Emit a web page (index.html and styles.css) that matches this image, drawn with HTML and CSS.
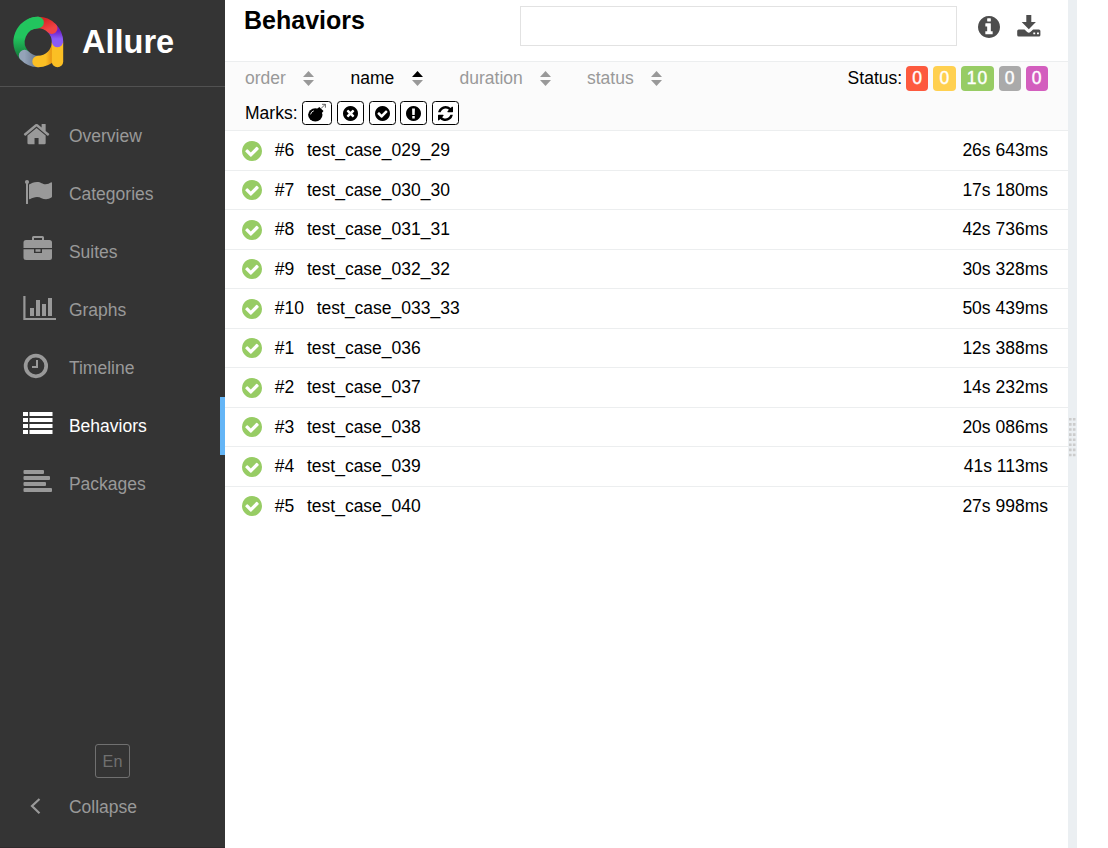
FILE: index.html
```html
<!DOCTYPE html>
<html lang="en">
<head>
<meta charset="utf-8">
<title>Allure Report</title>
<link rel="stylesheet" href="styles.css">
</head>
<body>
<svg width="0" height="0" class="defs" aria-hidden="true">
  <symbol id="check" viewBox="128 128 1536 1536"><path d="M1412 734q0-28-18-46l-91-90q-19-19-45-19t-45 19l-408 407-226-226q-19-19-45-19t-45 19l-91 90q-18 18-18 46 0 27 18 45l362 362q19 19 45 19 27 0 46-19l543-543q18-18 18-45zm252 162q0 209-103 385.5t-279.5 279.5-385.5 103-385.5-103-279.5-279.5-103-385.5 103-385.5 279.5-279.5 385.5-103 385.5 103 279.5 279.5 103 385.5z"/></symbol>
  <symbol id="sort" viewBox="0 0 11 15"><path class="up" d="M5.5 0 11 6H0z"/><path class="down" d="M0 9h11l-5.500 6z"/></symbol>
</svg>
<div class="app">
  <aside class="side">
    <div class="brand">
      <svg class="logo" width="52" height="52" viewBox="12 16 52 52" stroke-width="11.400" stroke-linecap="round">
        <defs>
          <linearGradient id="gp" x1="0" y1="0" x2="0" y2="1"><stop offset=".2" stop-color="#6d1fc9"/><stop offset=".8" stop-color="#8b5cf6"/></linearGradient>
          <linearGradient id="gr" x1="0" y1="0" x2="1" y2="1"><stop offset="0" stop-color="#d92626"/><stop offset="1" stop-color="#f04444"/></linearGradient>
          <linearGradient id="gg" x1="0" y1="0" x2="0" y2="1"><stop offset=".45" stop-color="#22c55e"/><stop offset="1" stop-color="#15803d"/></linearGradient>
          <linearGradient id="gs" x1="0" y1="0" x2="1" y2="0"><stop offset="0" stop-color="#94a3b8"/><stop offset="1" stop-color="#64748b"/></linearGradient>
          <linearGradient id="gy" x1="0" y1="0" x2="1" y2="0"><stop offset=".4" stop-color="#fbbf24"/><stop offset=".8" stop-color="#e0860c"/></linearGradient>
        </defs>
        <path stroke="url(#gg)" d="M24.500 55.500A19.500 19.500 0 0 1 38 22.500"/>
        <path stroke="url(#gs)" d="M24.500 55.500A19.500 19.500 0 0 0 38 61.500"/>
        <path stroke="url(#gy)" d="M38 61.500A19.500 19.500 0 0 0 57.500 42"/>
        <path stroke="#fbbf24" d="M57.500 43v18.500"/>
        <path stroke="url(#gp)" d="M51.800 28.200A19.500 19.500 0 0 1 57.500 41.500"/>
        <path stroke="url(#gr)" d="M38 22.500A19.500 19.500 0 0 1 51.800 28.200"/>
        <path stroke="#22c55e" d="M32 23.500A19.500 19.500 0 0 1 38.200 22.500"/>
      </svg>
      <span>Allure</span>
    </div>
    <nav class="nav">
      <a class="item"><svg width="36" height="58" viewBox="0 0 36 58"><path transform="translate(2.400 12.900) scale(.0158)" d="M1472 992v480q0 26-19 45t-45 19h-384v-384h-256v384h-384q-26 0-45-19t-19-45v-480q0-1 .5-3t.5-3l575-474 575 474q1 2 1 6zm223-69l-62 74q-8 9-21 11h-3q-13 0-21-7l-692-577-692 577q-12 8-24 7-13-2-21-11l-62-74q-8-10-7-23.500t11-21.500l719-599q32-26 76-26t76 26l244 204v-195q0-14 9-23t23-9h192q14 0 23 9t9 23v408l219 182q10 8 11 21.500t-7 23.500z"/></svg>Overview</a>
      <a class="item"><svg width="36" height="58" viewBox="0 0 36 58"><circle cx="7" cy="17" r="2.100"/><path d="M6 17h2v21.500q0 .5-.5.500h-1q-.5 0-.5-.500zM9 19.600C11 18.400 14 17 17 17c4 0 5.500 2.300 8.500 2.300 2.200 0 4.200-1.100 5.300-1.800q1.200-.6 1.200.6v13.300q0 .8-.7 1.200C29.500 33.500 28 34.200 26 34.200c-3.500 0-5.500-2.300-9-2.300-2.600 0-5 1.100-6.700 2.100Q9 34.700 9 33.500z"/></svg>Categories</a>
      <a class="item"><svg width="36" height="58" viewBox="0 0 36 58"><path fill-rule="evenodd" d="M12 17V14.500Q12 13 13.500 13h9.000q1.500 0 1.500 1.500V17h5.500q2.500 0 2.500 2.500V25H3.500v-5.500Q3.500 17 6 17zM14 17h8v-2h-8zM3.500 26.300H14V30h8v-3.700h10v8.200q0 2.500-2.500 2.500H6q-2.500 0-2.500-2.500zM15.500 26.300h5v2.400h-5z"/></svg>Suites</a>
      <a class="item"><svg width="36" height="58" viewBox="0 0 36 58"><path d="M3.300 15h2.200v22H36v2H3.300zM10 27h4v8h-4zM16 19h4v16h-4zM22 23h4v12h-4zM28 17h4v18h-4z"/></svg>Graphs</a>
      <a class="item"><svg width="36" height="58" viewBox="0 0 36 58"><circle cx="15.900" cy="27" r="10.300" fill="none" stroke="currentColor" stroke-width="3.700"/><path d="M16 21h2v8.000h-6v-2h4z"/></svg>Timeline</a>
      <a class="item active"><svg width="36" height="58" viewBox="0 0 36 58"><path d="M3 15h5v4H3zM9.500 15h23v4h-23zM3 21h5v4H3zM9.500 21h23v4h-23zM3 27h5v4H3zM9.500 27h23v4h-23zM3 33h5v4H3zM9.500 33h23v4h-23z"/></svg>Behaviors</a>
      <a class="item"><svg width="36" height="58" viewBox="0 0 36 58"><rect x="3.500" y="15" width="20.500" height="4" rx="1"/><rect x="3.500" y="21" width="26.500" height="4" rx="1"/><rect x="3.500" y="27" width="22.500" height="4" rx="1"/><rect x="3.500" y="33" width="28.500" height="4" rx="1"/></svg>Packages</a>
    </nav>
    <div class="foot">
      <span class="lang">En</span>
      <a class="item collapse"><svg width="36" height="58" viewBox="0 0 36 58"><path fill="none" stroke="currentColor" stroke-width="2.200" d="M19.500 21 12 28l7.500 7.300"/></svg>Collapse</a>
    </div>
  </aside>
  <main class="main">
    <header class="head">
      <h1>Behaviors</h1>
      <input class="search" type="text" aria-label="Search">
      <svg class="info" width="22" height="22" viewBox="128 128 1536 1536"><path d="M1152 1376v-160q0-14-9-23t-23-9h-96v-512q0-14-9-23t-23-9h-320q-14 0-23 9t-9 23v160q0 14 9 23t23 9h96v320h-96q-14 0-23 9t-9 23v160q0 14 9 23t23 9h448q14 0 23-9t9-23zm-128-896v-160q0-14-9-23t-23-9h-192q-14 0-23 9t-9 23v160q0 14 9 23t23 9h192q14 0 23-9t9-23zm640 416q0 209-103 385.500t-279.500 279.500-385.500 103-385.500-103-279.500-279.500-103-385.500 103-385.500 279.500-279.500 385.500-103 385.500 103 279.500 279.500 103 385.500z"/></svg>
      <svg class="save" width="24" height="22" viewBox="0 0 24 22"><path fill-rule="evenodd" d="M9.300 0h5v7h4.600L11.800 14.300 4.700 7h4.600zM1.700 14.400h5.800l2.700 2.600q1.600 1.300 3.200 0l2.700-2.600h5.800q1.500 0 1.500 1.500v4q0 1.500-1.500 1.500H1.700Q.2 21.400.2 19.900v-4q0-1.500 1.500-1.500zM16.300 17.500v1.800h1.900v-1.800zM20 17.500v1.800h1.900v-1.800z"/></svg>
    </header>
    <section class="filters">
      <div class="line">
        <span class="sort s1">order<svg width="11" height="15"><use href="#sort"/></svg></span>
        <span class="sort s2 on">name<svg width="11" height="15"><use href="#sort"/></svg></span>
        <span class="sort s3">duration<svg width="11" height="15"><use href="#sort"/></svg></span>
        <span class="sort s4">status<svg width="11" height="15"><use href="#sort"/></svg></span>
        <span class="statuses"><span class="label">Status:</span><b class="badge failed">0</b><b class="badge broken">0</b><b class="badge passed">10</b><b class="badge skipped">0</b><b class="badge unknown">0</b></span>
      </div>
      <div class="marks"><span class="label">Marks:</span>
        <span class="mark wide"><svg width="20" height="20" viewBox="0 0 20 20"><ellipse cx="8.300" cy="11.800" rx="7.200" ry="6.600"/><path d="m10 6 2.300-2.100 4.200 4.200L14 11z"/><path fill="none" stroke="#fff" stroke-width=".9" d="M3.600 11.400q.4-2.700 3.200-3.600"/><path fill="none" stroke="#555" stroke-width=".9" d="M14 5.600 18.500 1M15 1.300h3.400v3.400"/></svg></span>
        <span class="mark"><svg width="15" height="15" viewBox="128 128 1536 1536"><path d="M1277 1122q0-26-19-45l-181-181 181-181q19-19 19-45 0-27-19-46l-90-90q-19-19-46-19-26 0-45 19l-181 181-181-181q-19-19-45-19-27 0-46 19l-90 90q-19 19-19 46 0 26 19 45l181 181-181 181q-19 19-19 45 0 27 19 46l90 90q19 19 46 19 26 0 45-19l181-181 181 181q19 19 45 19 27 0 46-19l90-90q19-19 19-46zm387-226q0 209-103 385.500t-279.500 279.500-385.500 103-385.500-103-279.500-279.500-103-385.500 103-385.500 279.500-279.500 385.500-103 385.500 103 279.500 279.500 103 385.500z"/></svg></span>
        <span class="mark"><svg width="15" height="15"><use href="#check"/></svg></span>
        <span class="mark"><svg width="15" height="15" viewBox="128 128 1536 1536"><path d="M896 128q209 0 385.500 103t279.500 279.500 103 385.500-103 385.500-279.500 279.500-385.500 103-385.500-103-279.500-279.500-103-385.500 103-385.500 279.500-279.500 385.500-103zm128 1247v-190q0-14-9-23.500t-22-9.500h-192q-13 0-23 10t-10 23v190q0 13 10 23t23 10h192q13 0 22-9.500t9-23.500zm-2-344l18-621q0-12-10-18-10-8-24-8h-220q-14 0-24 8-10 6-10 18l17 621q0 10 10 17.500t24 7.500h185q14 0 23.500-7.500t10.500-17.500z"/></svg></span>
        <span class="mark"><svg width="15" height="15" viewBox="128 128 1536 1536"><path d="M1639 1056q0 5-1 7-64 268-268 434.500t-478 166.500q-146 0-282.500-55t-243.500-157l-129 129q-19 19-45 19t-45-19-19-45v-448q0-26 19-45t45-19h448q26 0 45 19t19 45-19 45l-137 137q71 66 161 102t187 36q134 0 250-65t186-179q11-17 53-117 8-23 30-23h192q13 0 22.500 9.500t9.500 22.500zm25-800v448q0 26-19 45t-45 19h-448q-26 0-45-19t-19-45 19-45l138-138q-148-137-349-137-134 0-250 65t-186 179q-11 17-53 117-8 23-30 23h-199q-13 0-22.500-9.500t-9.500-22.500v-7q65-268 270-434.500t480-166.500q146 0 284 55.500t245 156.500l130-129q19-19 45-19t45 19 19 45z"/></svg></span>
      </div>
    </section>
    <section class="list">
      <div class="row"><svg width="20" height="20"><use href="#check"/></svg><span class="num">#6</span><span>test_case_029_29</span><span class="time">26s 643ms</span></div>
      <div class="row"><svg width="20" height="20"><use href="#check"/></svg><span class="num">#7</span><span>test_case_030_30</span><span class="time">17s 180ms</span></div>
      <div class="row"><svg width="20" height="20"><use href="#check"/></svg><span class="num">#8</span><span>test_case_031_31</span><span class="time">42s 736ms</span></div>
      <div class="row"><svg width="20" height="20"><use href="#check"/></svg><span class="num">#9</span><span>test_case_032_32</span><span class="time">30s 328ms</span></div>
      <div class="row"><svg width="20" height="20"><use href="#check"/></svg><span class="num">#10</span><span>test_case_033_33</span><span class="time">50s 439ms</span></div>
      <div class="row"><svg width="20" height="20"><use href="#check"/></svg><span class="num">#1</span><span>test_case_036</span><span class="time">12s 388ms</span></div>
      <div class="row"><svg width="20" height="20"><use href="#check"/></svg><span class="num">#2</span><span>test_case_037</span><span class="time">14s 232ms</span></div>
      <div class="row"><svg width="20" height="20"><use href="#check"/></svg><span class="num">#3</span><span>test_case_038</span><span class="time">20s 086ms</span></div>
      <div class="row"><svg width="20" height="20"><use href="#check"/></svg><span class="num">#4</span><span>test_case_039</span><span class="time">41s 113ms</span></div>
      <div class="row"><svg width="20" height="20"><use href="#check"/></svg><span class="num">#5</span><span>test_case_040</span><span class="time">27s 998ms</span></div>
    </section>
  </main>
  <div class="gutter"><svg width="7" height="39" viewBox="0 0 7 39"><path class="grip" fill="none" stroke="#ccc" stroke-width="2.600" stroke-dasharray="2.600 2.500" d="M1.300 0v39M5.200 0v39"/></svg></div>
</div>
</body>
</html>
```
FILE: styles.css
```css
* { box-sizing: border-box; }
body {
  margin: 0;
  background: #fff;
  color: #000;
  font: 17.5px/20px "Liberation Sans", Arial, sans-serif;
}
svg { display: block; flex: none; fill: currentColor; }
.defs { position: absolute; }
.app { display: flex; height: 848px; overflow: hidden; }

.side {
  display: flex;
  flex-direction: column;
  width: 225px;
  background: #343434;
  color: #999;
  border-bottom: 1px solid #2f2a2c;
}
.brand {
  display: flex;
  align-items: center;
  height: 87px;
  padding: 0 0 2px 12px;
  border-bottom: 1px solid #515151;
  color: #fff;
  font-size: 32.5px;
  font-weight: bold;
}
.brand .logo { margin-right: 18.1px; fill: none; }
.nav { padding-top: 20px; }
.item {
  display: flex;
  align-items: center;
  height: 58px;
  padding-left: 20px;
}
.item svg { margin-right: 12.9px; }
.active { color: #fff; border-right: 5px solid #64b5f6; }
.foot {
  display: flex;
  flex-direction: column;
  margin-top: auto;
  padding-bottom: 11px;
}
.lang {
  align-self: center;
  width: 35px;
  height: 34px;
  border: 1px solid #707070;
  border-radius: 3px;
  color: #707070;
  font-size: 16.2px;
  line-height: 33px;
  text-align: center;
}

.main { width: 843px; }
.head {
  display: flex;
  height: 61px;
  padding-left: 19px;
}
.head h1 {
  width: 276px;
  margin: 0;
  padding-top: 5px;
  font-size: 25px;
  line-height: 30px;
}
.search {
  width: 437px;
  height: 40px;
  margin-top: 6px;
  border: 1px solid #e2e2e2;
  background: #fff;
}
.info, .save { color: #4d4d4d; }
.info { margin: 16px 0 0 21px; }
.save { margin: 15px 0 0 17px; }

.filters {
  height: 70px;
  border-top: 1px solid #eceeef;
  border-bottom: 1px solid #eceeef;
  background: #fbfbfb;
}
.line {
  display: flex;
  align-items: center;
  height: 32px;
  padding: 0 20px;
}
.sort { display: flex; align-items: center; justify-content: space-between; color: #999; }
.sort svg { margin-top: 1px; }
.s1 { width: 69px; margin-right: 36.5px; }
.s2 { width: 72px; margin-right: 37px; }
.s3 { width: 91px; margin-right: 36.5px; }
.s4 { width: 75px; }
.on { color: #000; }
.on svg { --down: #999; }
.down { fill: var(--down, currentColor); }
.statuses { display: flex; align-items: center; gap: 5px; margin-left: auto; }
.statuses .label { margin-right: -0.9px; }
.badge {
  height: 25px;
  margin-top: 1px;
  padding: 0 5.5px 0 6.1px;
  border-radius: 4px;
  color: #fff;
  font-weight: normal;
  letter-spacing: 0.9px;
  line-height: 25px;
  -webkit-text-stroke: 0.4px #fff;
}
.failed { background: #fd5a3e; }
.broken { background: #ffd050; }
.passed { background: #97cc64; }
.skipped { background: #aaa; }
.unknown { background: #d35ebe; }
.marks { display: flex; align-items: center; gap: 4.8px; height: 36px; padding: 2px 20px 0; }
.marks .label { margin-right: -0.4px; }
.mark {
  display: flex;
  align-items: center;
  justify-content: center;
  width: 27px;
  height: 24px;
  border: 1px solid #000;
  border-radius: 3.5px;
  background: #fff;
}
.wide { width: 30px; }

.row {
  display: flex;
  align-items: center;
  height: 39.5px;
  padding: 0 20px 0 17.4px;
  border-bottom: 1px solid #eceeef;
}
.row:last-child { border-color: transparent; }
.row svg { color: #97cc64; margin: 1px 12.4px 0 0; }
.num { margin-right: 12.7px; }
.time { margin-left: auto; }

.gutter {
  display: flex;
  align-items: center;
  width: 9px;
  padding: 26px 0 0 1px;
  background: #ebeff2;
}
```
